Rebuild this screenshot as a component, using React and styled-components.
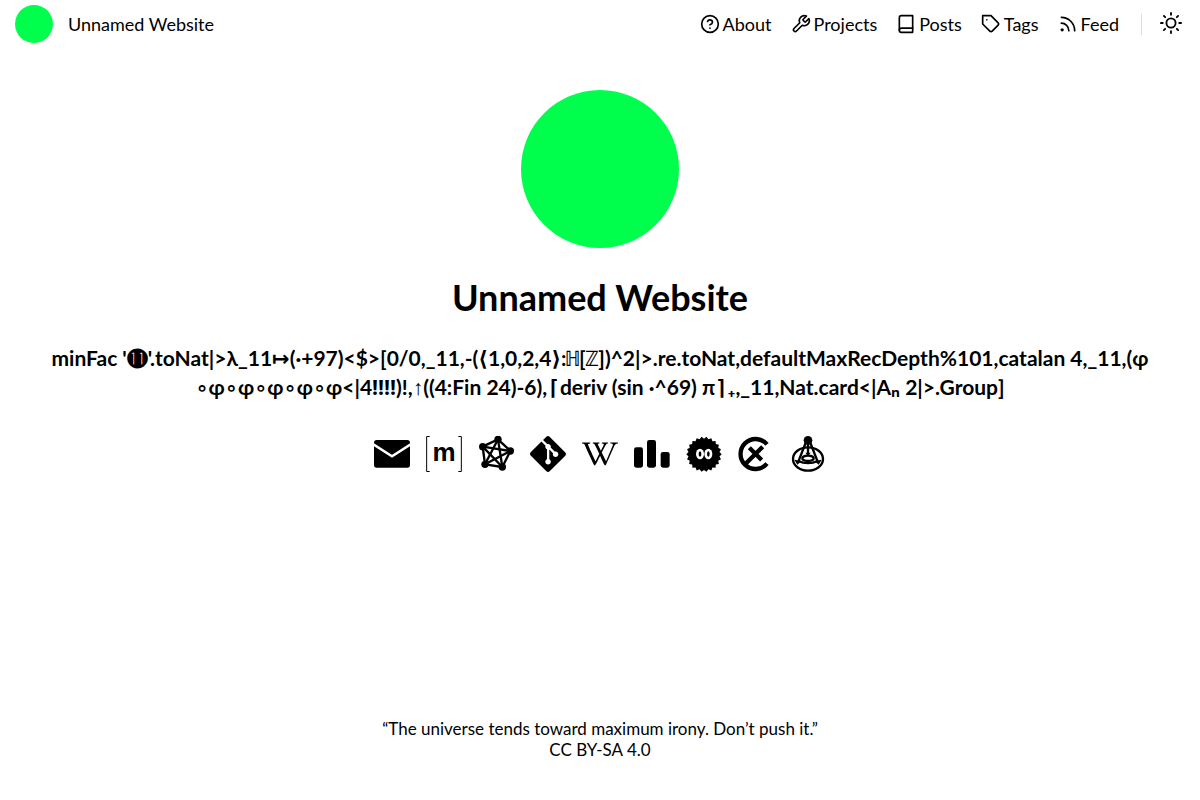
import React from "react";
import styled, { createGlobalStyle } from "styled-components";
import { FiHelpCircle, FiTool, FiBook, FiTag, FiRss, FiSun } from "react-icons/fi";
import { SiGit, SiWikipedia } from "react-icons/si";

const GlobalStyle = createGlobalStyle`
  *, *::before, *::after { box-sizing: border-box; }
  body {
    margin: 0;
    background: #fff;
    color: #000;
    font: 18px/21px Lato, "DejaVu Sans", sans-serif;
  }
  a { color: inherit; text-decoration: none; }
`;

const Page = styled.div`
  min-height: 100vh;
  display: flex;
  flex-direction: column;
`;

const Header = styled.header`
  display: flex;
  align-items: center;
  justify-content: space-between;
  height: 48px;
  padding: 0 18px 0 15px;
`;

const Brand = styled.a`
  display: flex;
  align-items: center;
  gap: 15px;
`;

const Disc = styled.span`
  display: block;
  width: ${(p) => p.$size}px;
  height: ${(p) => p.$size}px;
  border-radius: 50%;
  background: #00ff4c;
`;

const Nav = styled.nav`
  display: flex;
  align-items: center;
  gap: 19px;
`;

const NavLink = styled.a`
  display: flex;
  align-items: center;
  gap: 3px;
  svg { width: 20px; height: 20px; }
`;

const ThemeArea = styled.div`
  display: flex;
  align-items: center;
  height: 21px;
  margin-left: 3px;
  padding-left: 18px;
  border-left: 1px solid #ddd;
`;

const ThemeButton = styled.button`
  display: flex;
  padding: 0 0 2px;
  border: 0;
  background: none;
  color: inherit;
  cursor: pointer;
  svg { width: 22px; height: 22px; }
`;

const Main = styled.main`
  flex: 1;
  display: flex;
  flex-direction: column;
  align-items: center;
  padding: 42px 40px 0;
  text-align: center;
`;

const Title = styled.h1`
  margin: 27px 0 24px;
  font-size: 36px;
  line-height: 44px;
`;

const Subtitle = styled.h2`
  margin: 0;
  font-size: 21px;
  line-height: 29px;
`;

const Sym = styled.span`
  font-family: "Open Sans", monospace;
  line-height: 1;
`;

const Arrow = styled.span`
  font-family: "Liberation Sans", sans-serif;
  font-weight: 400;
  line-height: 1;
`;

const Socials = styled.div`
  display: flex;
  gap: 16px;
  margin-top: 35px;
`;

const SocialLink = styled.a`
  display: block;
  height: 36px;
  svg { display: block; width: 36px; height: 36px; }
`;

const Footer = styled.footer`
  padding: 0 16px 40px;
  font-size: 17px;
  text-align: center;
  p { margin: 0; }
`;

const Glyph = ({ children }) => (
  <svg viewBox="0 0 108 108" fill="currentColor" aria-hidden="true">{children}</svg>
);

const MailIcon = () => (
  <Glyph>
    <rect y="12" width="108" height="83" rx="8" />
    <path d="M-2 25L54 61L110 25" fill="none" stroke="#fff" strokeWidth="7" />
  </Glyph>
);

const MatrixIcon = () => (
  <Glyph>
    <path d="M11 1.500H2V106.500H11M97 1.500H106V106.500H97" fill="none" stroke="currentColor" strokeWidth="3" />
    <text x="54" y="74" textAnchor="middle" fontFamily="Liberation Sans, sans-serif" fontWeight="700" fontSize="78">m</text>
  </Glyph>
);

const nodes = [[60, 10], [97, 45], [73, 93], [21, 85], [14, 32]];

const FediverseIcon = () => (
  <Glyph>
    {nodes.map(([x1, y1], i) =>
      nodes.slice(i + 1).map(([x2, y2]) => (
        <line key={`${x2}-${y2}`} x1={x1} y1={y1} x2={x2} y2={y2} stroke="currentColor" strokeWidth="7" />
      ))
    )}
    {nodes.map(([x, y]) => <circle key={x} cx={x} cy={y} r="11" />)}
  </Glyph>
);

const BarsIcon = () => (
  <Glyph>
    <rect x="0" y="34" width="27" height="61" rx="7" />
    <rect x="39" y="12" width="27" height="83" rx="7" />
    <rect x="80" y="48" width="27" height="47" rx="7" />
  </Glyph>
);

const spikes = Array.from({ length: 44 }, (_, i) => {
  const r = i % 2 ? 47 : 53;
  const a = (i * Math.PI) / 22;
  return `${(54 + r * Math.cos(a)).toFixed(1)},${(55 + r * Math.sin(a)).toFixed(1)}`;
}).join(" ");

const SootIcon = () => (
  <Glyph>
    <polygon points={spikes} />
    <ellipse cx="42" cy="54" rx="12" ry="16" fill="#fff" />
    <ellipse cx="67" cy="54" rx="12" ry="16" fill="#fff" />
    <ellipse cx="42" cy="54" rx="4" ry="8" />
    <ellipse cx="67" cy="54" rx="4" ry="8" />
  </Glyph>
);

const CrossRingIcon = () => (
  <Glyph>
    <g fill="none" stroke="currentColor" strokeWidth="13">
      <path d="M87 25A45 45 0 1 0 87 83" />
      <path d="M34 35L71 72M74 32L19 87" />
    </g>
  </Glyph>
);

const PendulumIcon = () => (
  <Glyph>
    <circle cx="54" cy="13" r="13" />
    <g fill="none" stroke="currentColor" strokeWidth="7">
      <ellipse cx="54" cy="69" rx="45" ry="35" />
      <path d="M48 18L25 77M60 18L83 77M54 20V56" />
      <ellipse cx="54" cy="67" rx="17" ry="8" />
      <path d="M24 75Q54 88 84 75" />
    </g>
    <path d="M13 71L35 75L22 86ZM95 71L73 75L86 86ZM46 50H62L54 60Z" />
  </Glyph>
);

const navItems = [
  ["About", FiHelpCircle],
  ["Projects", FiTool],
  ["Posts", FiBook],
  ["Tags", FiTag],
  ["Feed", FiRss],
];

const socialItems = [
  ["Email", MailIcon],
  ["Matrix", MatrixIcon],
  ["Fediverse", FediverseIcon],
  ["Git", SiGit],
  ["Wikipedia", SiWikipedia],
  ["Codeforces", BarsIcon],
  ["Soot", SootIcon],
  ["Cross", CrossRingIcon],
  ["Pendulum", PendulumIcon],
];

export default function App() {
  return (
    <Page>
      <GlobalStyle />
      <Header>
        <Brand href="#"><Disc $size={38} />Unnamed Website</Brand>
        <Nav>
          {navItems.map(([label, Icon]) => (
            <NavLink href="#" key={label}><Icon aria-hidden="true" />{label}</NavLink>
          ))}
          <ThemeArea>
            <ThemeButton type="button" aria-label="Toggle theme"><FiSun /></ThemeButton>
          </ThemeArea>
        </Nav>
      </Header>
      <Main>
        <Disc $size={158} />
        <Title>Unnamed Website</Title>
        <Subtitle>
          {"minFac '"}<Sym>⓫</Sym>{"'.toNat|>λ_11↦(·+97)<$>[0/0,_11,-(⟨1,0,2,4⟩:"}<Sym>ℍ</Sym>[<Sym>ℤ</Sym>{"])^2|>.re.toNat,defaultMaxRecDepth%101,catalan 4,_11,(φ"}
          <wbr />
          {"∘φ∘φ∘φ∘φ∘φ<|4"}<Sym>‼‼</Sym>{")!,"}<Arrow>↑</Arrow>{"((4:Fin 24)-6),"}<Sym>⌈</Sym>{"deriv (sin ·^69) π"}<Sym>⌉₊</Sym>{",_11,Nat.card<|A"}<Sym>ₙ</Sym>{" 2|>.Group]"}
        </Subtitle>
        <Socials>
          {socialItems.map(([label, Icon]) => (
            <SocialLink href="#" aria-label={label} key={label}><Icon /></SocialLink>
          ))}
        </Socials>
      </Main>
      <Footer>
        <p>“The universe tends toward maximum irony. Don’t push it.”</p>
        <p>CC BY-SA 4.0</p>
      </Footer>
    </Page>
  );
}
